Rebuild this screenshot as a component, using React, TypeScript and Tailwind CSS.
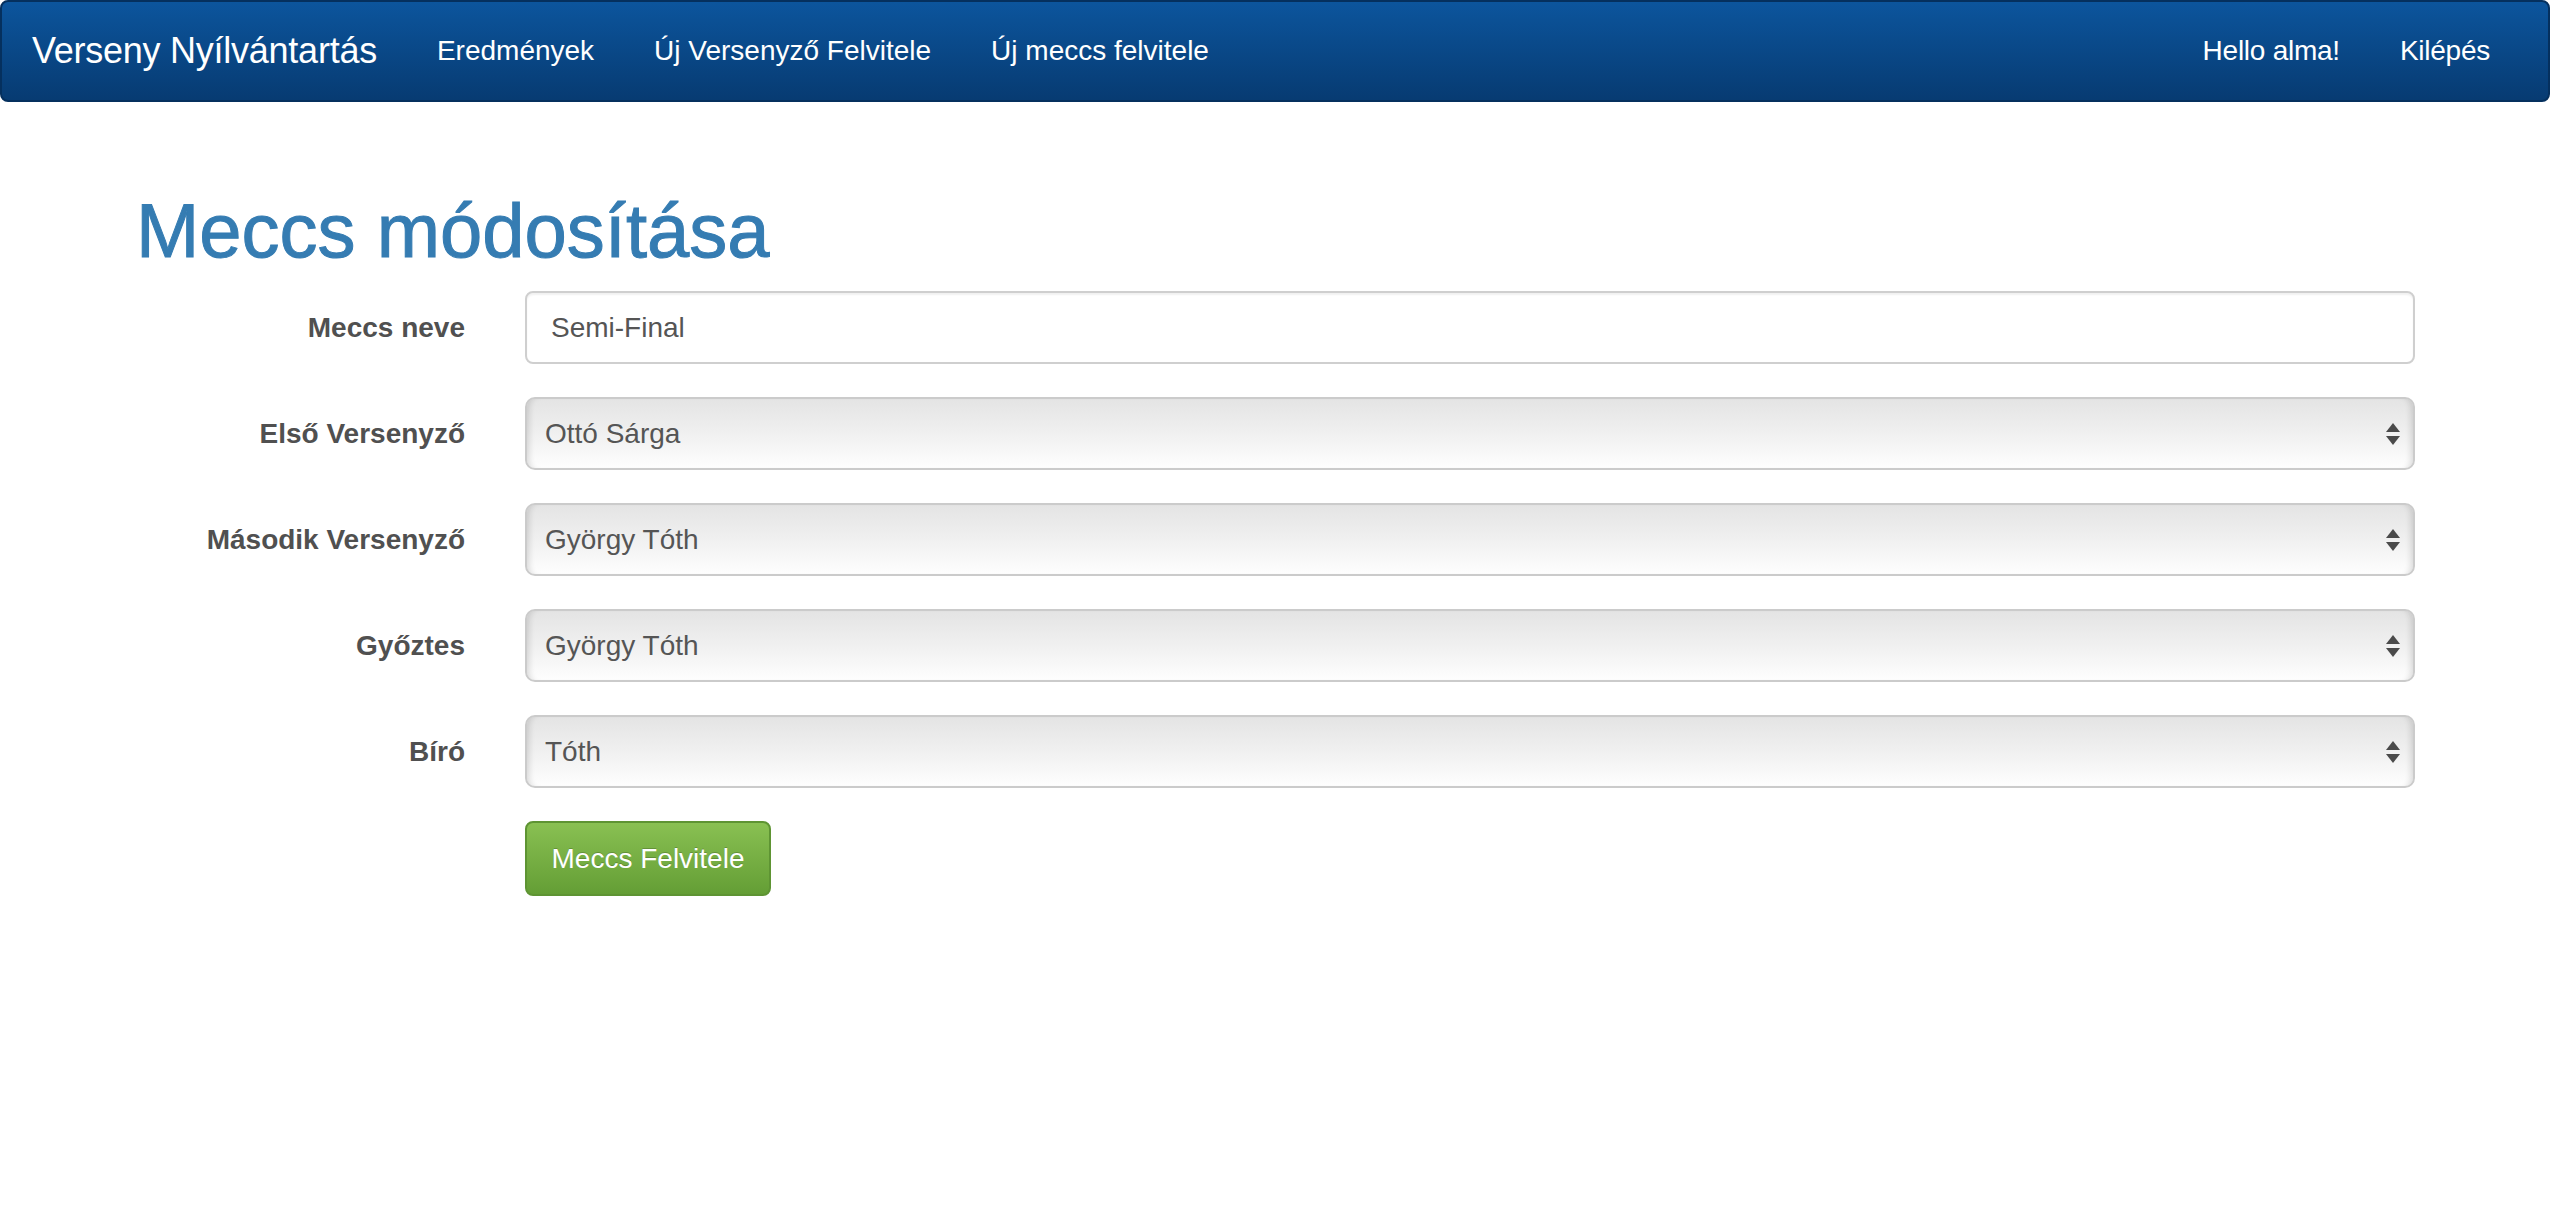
import React, { useState } from "react";

const players = ["Ottó Sárga", "György Tóth", "Tóth"];

function SelectArrows() {
  return (
    <svg
      className="pointer-events-none absolute right-[14px] top-1/2 -translate-y-1/2"
      width="16"
      height="24"
      viewBox="0 0 16 24"
    >
      <path d="M8 1 L15 10 L1 10 Z" fill="#4a4a4a" />
      <path d="M1 14 L15 14 L8 23 Z" fill="#4a4a4a" />
    </svg>
  );
}

function FormSelect({ value, onChange }: { value: string; onChange: (v: string) => void }) {
  return (
    <div className="relative h-[73px]">
      <select
        value={value}
        onChange={(e) => onChange(e.target.value)}
        className="h-full w-full appearance-none rounded-[10px] border-2 border-[#cbcbcb] bg-gradient-to-b from-[#e4e4e4] via-[#f0f0f0] to-[#fefefe] pl-[18px] pr-[50px] text-[28px] text-[#555] outline-none shadow-[inset_7px_0_6px_-5px_rgba(0,0,0,0.14),inset_-7px_0_6px_-5px_rgba(0,0,0,0.14)]"
      >
        {players.map((p) => (
          <option key={p} value={p}>
            {p}
          </option>
        ))}
      </select>
      <SelectArrows />
    </div>
  );
}

export default function App() {
  const [name, setName] = useState("Semi-Final");
  const [first, setFirst] = useState("Ottó Sárga");
  const [second, setSecond] = useState("György Tóth");
  const [winner, setWinner] = useState("György Tóth");
  const [referee, setReferee] = useState("Tóth");

  const selects = [
    { label: "Első Versenyző", value: first, set: setFirst },
    { label: "Második Versenyző", value: second, set: setSecond },
    { label: "Győztes", value: winner, set: setWinner },
    { label: "Bíró", value: referee, set: setReferee },
  ];

  return (
    <div className="min-h-screen bg-white font-['Liberation_Sans',Arial,sans-serif]">
      {/* NAVBAR */}
      <nav className="flex h-[102px] items-center justify-between rounded-[8px] border-2 border-[#05305e] bg-gradient-to-b from-[#0c559d] to-[#073b72] pl-[30px] pr-[58px] text-white">
        <div className="flex items-center">
          <a className="pr-[30px] text-[36px] tracking-[-0.25px]">Verseny Nyílvántartás</a>
          <a className="px-[30px] text-[28px]">Eredmények</a>
          <a className="px-[30px] text-[28px]">Új Versenyző Felvitele</a>
          <a className="px-[30px] text-[28px]">Új meccs felvitele</a>
        </div>
        <div className="flex items-center tracking-[-0.25px]">
          <a className="px-[30px] text-[28px]">Hello alma!</a>
          <a className="pl-[30px] text-[28px]">Kilépés</a>
        </div>
      </nav>

      <main className="pl-[105px] pt-[91px]">
        <h1 className="pl-[31px] text-[76px] leading-[76px] text-[#357cb2] [-webkit-text-stroke:1px_#357cb2]">
          Meccs módosítása
        </h1>

        <form className="mt-[22px] grid grid-cols-[360px_1890px] gap-x-[60px] gap-y-[33px]">
          <label className="flex items-center justify-end text-[28px] font-bold text-[#505050]">Meccs neve</label>
          <input
            value={name}
            onChange={(e) => setName(e.target.value)}
            className="h-[73px] w-full rounded-[8px] border-2 border-[#cfcfcf] bg-white px-[24px] text-[28px] text-[#555] outline-none shadow-[inset_0_2px_2px_rgba(0,0,0,0.06)]"
          />

          {selects.map((s) => (
            <React.Fragment key={s.label}>
              <label className="flex items-center justify-end text-[28px] font-bold text-[#505050]">{s.label}</label>
              <FormSelect value={s.value} onChange={s.set} />
            </React.Fragment>
          ))}

          <div />
          <div>
            <button
              type="button"
              className="h-[75px] w-[246px] rounded-[8px] border-2 border-[#5e9433] bg-gradient-to-b from-[#89c052] to-[#649e35] text-[28px] text-white [text-shadow:0_-1px_0_rgba(0,0,0,0.2)]"
            >
              Meccs Felvitele
            </button>
          </div>
        </form>
      </main>
    </div>
  );
}
